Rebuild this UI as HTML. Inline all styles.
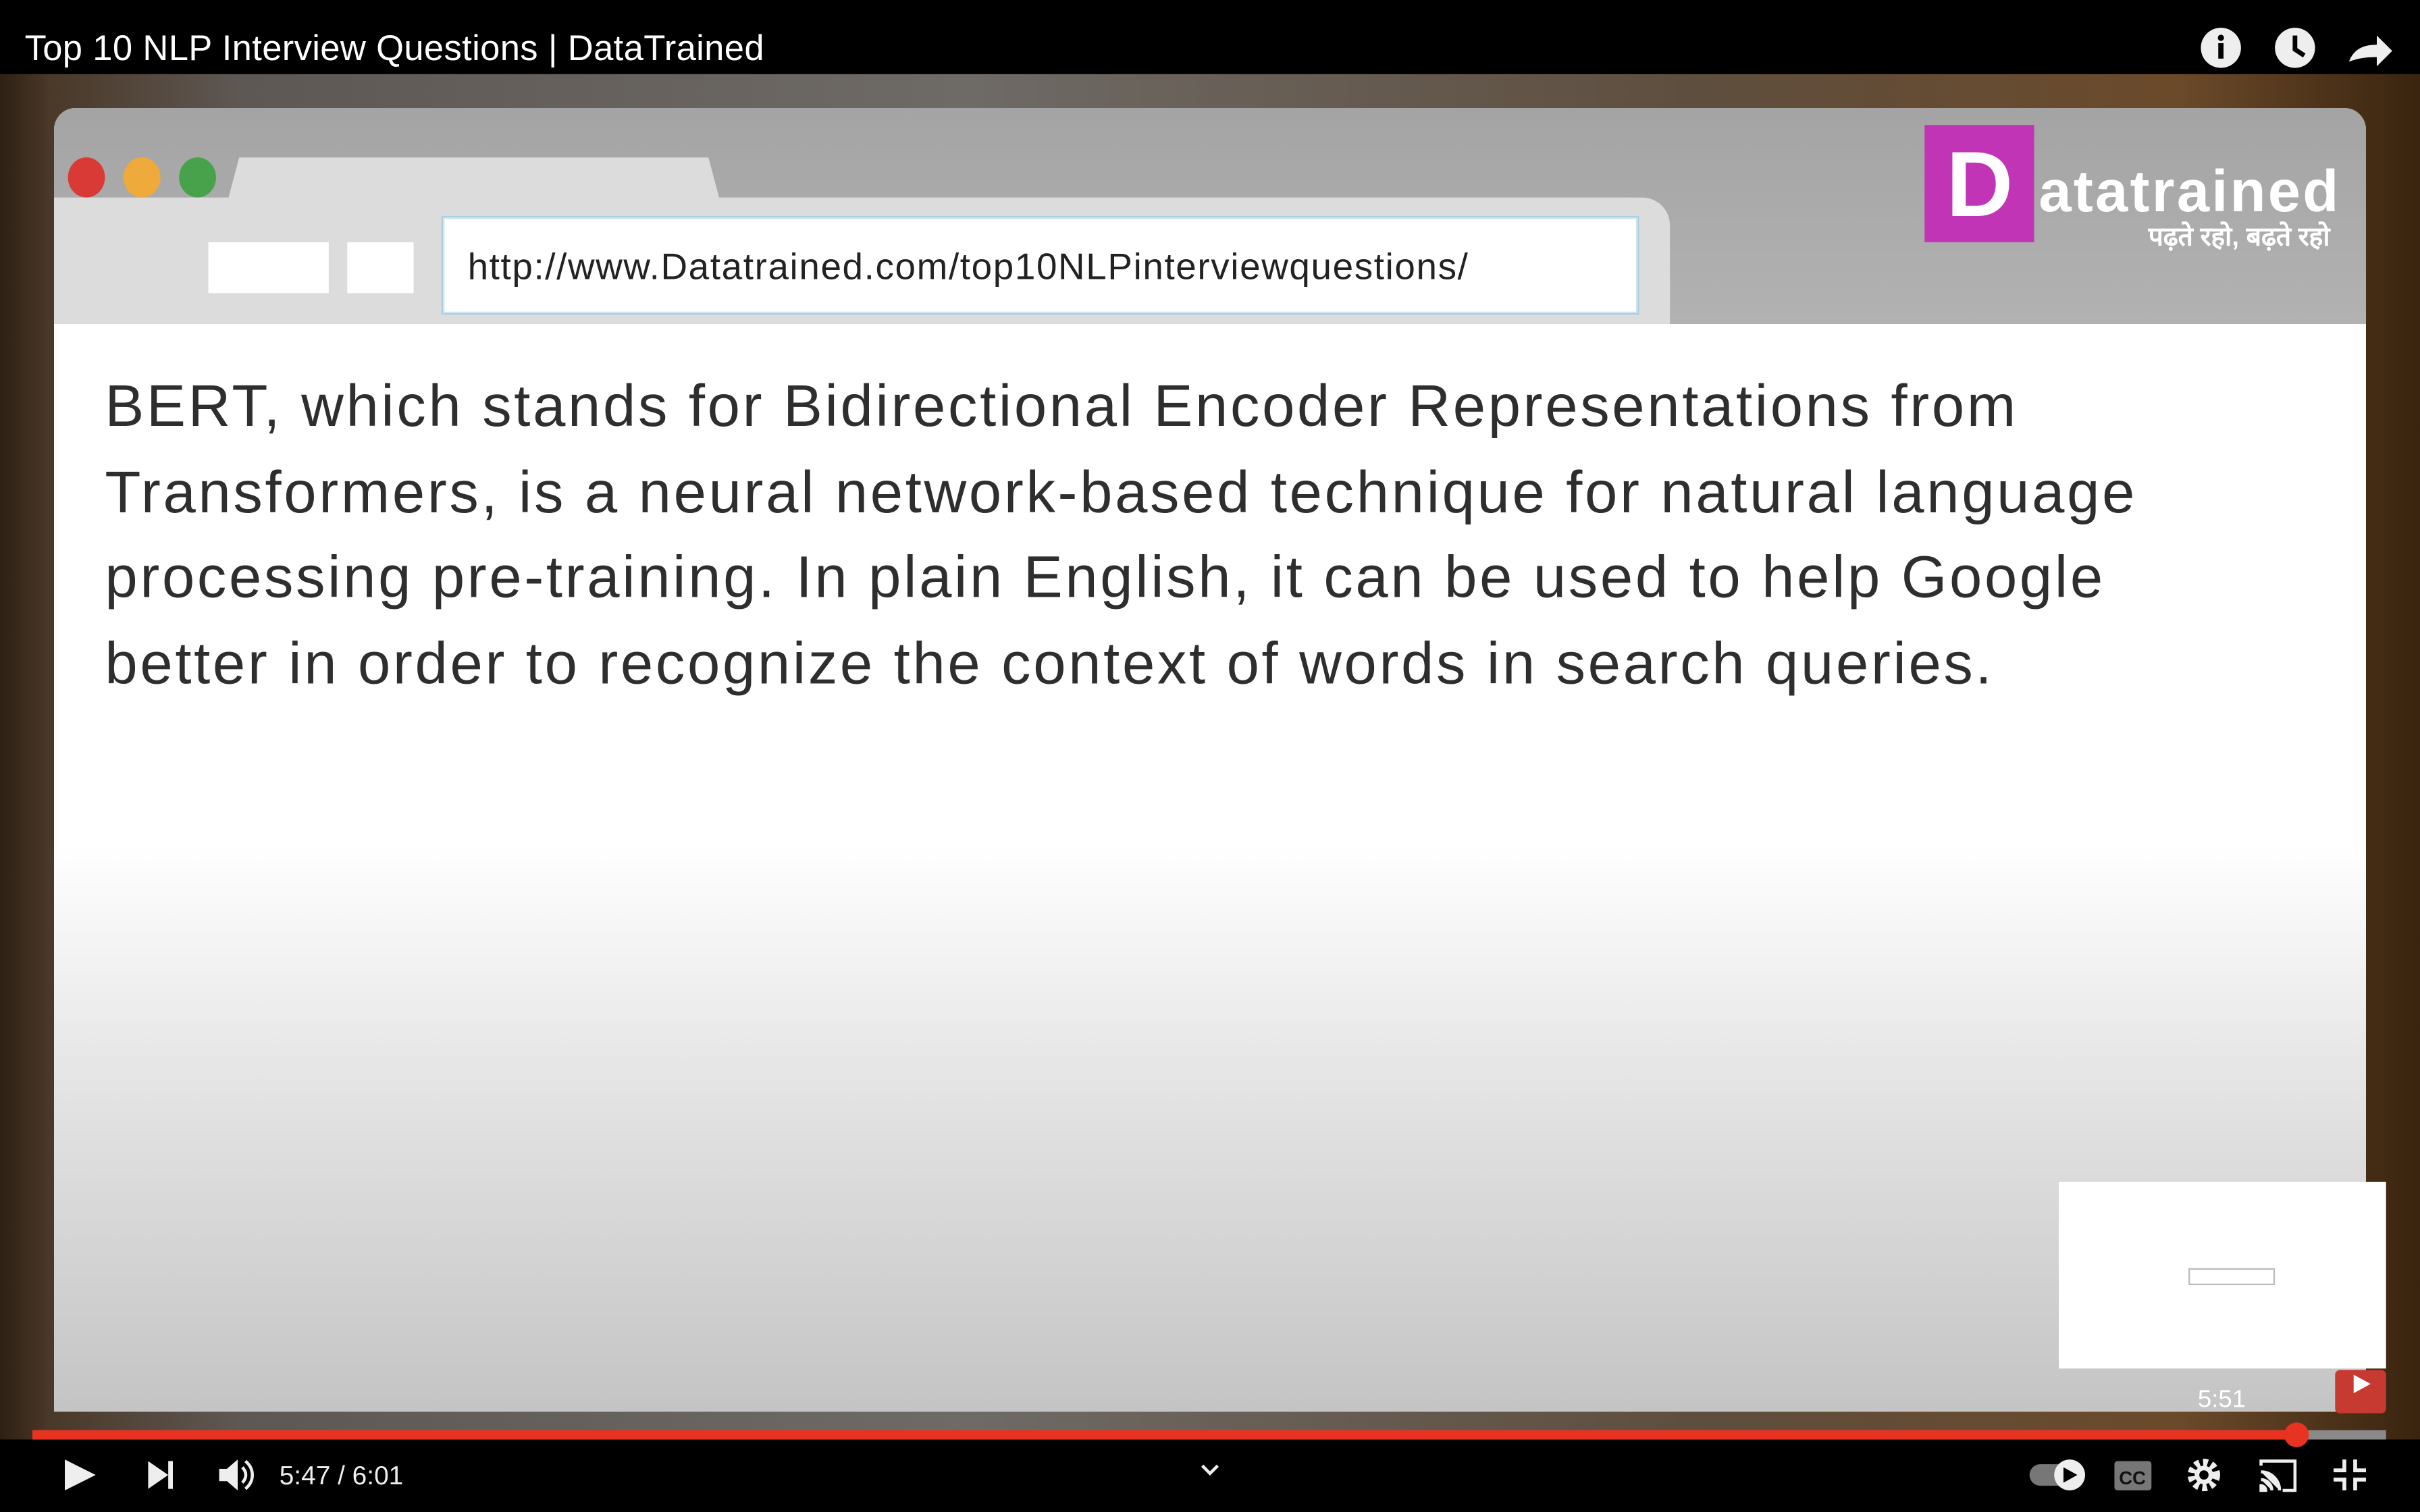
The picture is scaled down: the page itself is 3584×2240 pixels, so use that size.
<!DOCTYPE html>
<html><head><meta charset="utf-8"><style>
html,body{margin:0;padding:0;background:#000;overflow:hidden;width:3584px;height:2240px}
#w{position:absolute;left:0;top:0;width:1568px;height:980px;transform:scale(2.285714);transform-origin:0 0;font-family:"Liberation Sans",sans-serif;background:#000}
.a{position:absolute}
</style></head><body><div id="w">
<div class="a" style="left:0;top:48px;width:1568px;height:885px;background:linear-gradient(90deg,#2e2014 0%,#4a3828 2%,#5e5854 10%,#6e6a66 40%,#5e4e3e 70%,#6b4a2a 90%,#3a240f 100%)"></div>
<div class="a" style="left:0;top:0;width:1568px;height:48px;background:#000"></div>
<div class="a" style="left:16px;top:16px;color:#fff;font-size:23px;line-height:30px;letter-spacing:0.15px">Top 10 NLP Interview Questions | DataTrained</div>
<svg class="a" style="left:1424px;top:16px" width="128" height="30" viewBox="0 0 128 30">
<circle cx="15" cy="15" r="13" fill="#eee"/><rect x="13.3" y="12" width="3.4" height="10" fill="#000"/><circle cx="15" cy="8.5" r="2" fill="#000"/>
<circle cx="63" cy="15" r="13" fill="#eee"/><path d="M63 7v9l6 4" stroke="#000" stroke-width="3" fill="none"/>
<path d="M98 24c3-8 9-11 18-11v-6l10 10-10 10v-6c-8 0-13 1-18 3z" fill="#eee"/>
</svg>
<div class="a" style="left:35px;top:70px;width:1498px;height:845px;border-radius:14px 14px 0 0;overflow:hidden;background:#fff">
  <div class="a" style="left:0;top:0;width:1498px;height:140px;background:linear-gradient(#a4a4a4,#b2b2b2)"></div>
  <div class="a" style="left:0;top:58px;width:1047px;height:82px;background:#dcdcdc;border-radius:0 18px 0 0"></div>
  <div class="a" style="left:112px;top:32px;width:320px;height:30px;background:#dcdcdc;clip-path:polygon(8px 0,312px 0,320px 30px,0 30px)"></div>
  <div class="a" style="left:100px;top:87px;width:78px;height:33px;background:#fff"></div>
  <div class="a" style="left:190px;top:87px;width:43px;height:33px;background:#fff"></div>
  <div class="a" style="left:251px;top:70px;width:774px;height:62px;background:#fff;border:1px solid #a9cfe0;box-shadow:inset 0 0 0 1px #cfe5ef"></div>
  <div class="a" style="left:268px;top:90px;font-size:24px;color:#222;letter-spacing:0.7px">http://www.Datatrained.com/top10NLPinterviewquestions/</div>
  <div class="a" style="left:0;top:140px;width:1498px;height:705px;background:linear-gradient(#fff 0%,#fff 48%,#e4e4e4 70%,#c4c4c4 100%)"></div>
  <div class="a" style="left:33px;top:167px;width:1480px;white-space:nowrap;font-size:38px;letter-spacing:1.6px;line-height:55.7px;color:#2e2e2e">BERT, which stands for Bidirectional Encoder Representations from<br>Transformers, is a neural network-based technique for natural language<br>processing pre-training. In plain English, it can be used to help Google<br>better in order to recognize the context of words in search queries.</div>
  <div class="a" style="left:1212px;top:11px;width:71px;height:76px;background:#c234b6"></div>
  <div class="a" style="left:1226px;top:15px;color:#fff;font-weight:bold;font-size:60px;line-height:70px">D</div>
  <div class="a" style="left:1286px;top:30px;color:#fff;font-weight:bold;font-size:38px;line-height:50px;letter-spacing:1.4px">atatrained</div>
  <div class="a" style="left:1357px;top:72px;color:#fff;font-size:17px;line-height:24px;font-weight:bold;font-family:'Liberation Sans','DejaVu Sans',sans-serif">पढ़ते रहो, बढ़ते रहो</div>
</div>
<div class="a" style="left:44px;top:102px;width:24px;height:26px;border-radius:50%;background:#d93a36"></div>
<div class="a" style="left:80px;top:102px;width:24px;height:26px;border-radius:50%;background:#eeaa3a"></div>
<div class="a" style="left:116px;top:102px;width:24px;height:26px;border-radius:50%;background:#48a24c"></div>
<div class="a" style="left:1334px;top:766px;width:212px;height:121px;background:#fff"></div>
<div class="a" style="left:1418px;top:822px;width:54px;height:9px;border:1px solid #bbb"></div>
<div class="a" style="left:1424px;top:899px;color:#fff;font-size:16px">5:51</div>
<div class="a" style="left:1513px;top:888px;width:33px;height:28px;background:#c63a32;border-radius:3px"></div>
<svg class="a" style="left:1522px;top:890px" width="16" height="14"><path d="M3 1l11 6-11 6z" fill="#fff"/></svg>
<div class="a" style="left:0;top:933px;width:1568px;height:47px;background:#000"></div>
<div class="a" style="left:21px;top:927px;width:1525px;height:6px;background:#8a8a8a"></div>
<div class="a" style="left:21px;top:927px;width:1467px;height:6px;background:#e83323"></div>
<div class="a" style="left:1480px;top:922px;width:16px;height:16px;border-radius:50%;background:#e83323"></div>
<svg class="a" style="left:0;top:936px" width="1568" height="44" viewBox="0 0 1568 44">
<path d="M42 10l20 10-20 10z" fill="#eee"/>
<path d="M96 11l13 9-13 9z" fill="#eee"/><rect x="109" y="11" width="3" height="18" fill="#eee"/>
<path d="M142 16h5l7-6v20l-7-6h-5z" fill="#eee"/><path d="M157 15c3 3 3 7 0 10" stroke="#eee" stroke-width="2" fill="none"/><path d="M159 11c6 5 6 13 0 18" stroke="#eee" stroke-width="2" fill="none"/>
<text x="181" y="26" fill="#eee" font-family="Liberation Sans" font-size="17">5:47 / 6:01</text>
<path d="M779 14l5 5 5-5" stroke="#eee" stroke-width="2" fill="none"/>
<rect x="1315" y="13" width="28" height="14" rx="7" fill="#777"/><circle cx="1341" cy="20" r="10" fill="#eee"/><path d="M1337 15l9 5-9 5z" fill="#000"/>
<rect x="1370" y="11" width="24" height="19" rx="2" fill="#777"/><text x="1373" y="26" fill="#111" font-size="12" font-weight="bold" font-family="Liberation Sans">CC</text>
<circle cx="1428" cy="20" r="8" fill="none" stroke="#eee" stroke-width="5" stroke-dasharray="3 2.3"/><circle cx="1428" cy="20" r="6" fill="#eee"/><circle cx="1428" cy="20" r="3" fill="#000"/>
<path d="M1465 14v-3h22v19h-8" stroke="#eee" stroke-width="2" fill="none"/><path d="M1465 30h3a3 3 0 0 0-3-3zM1465 23a7 7 0 0 1 7 7M1465 18a12 12 0 0 1 12 12" stroke="#eee" stroke-width="2" fill="#eee"/>
<path d="M1519 10v7h-7M1526 10v7h7M1519 30v-7h-7M1526 30v-7h7" stroke="#eee" stroke-width="2.5" fill="none"/>
</svg>
</div></body></html>
